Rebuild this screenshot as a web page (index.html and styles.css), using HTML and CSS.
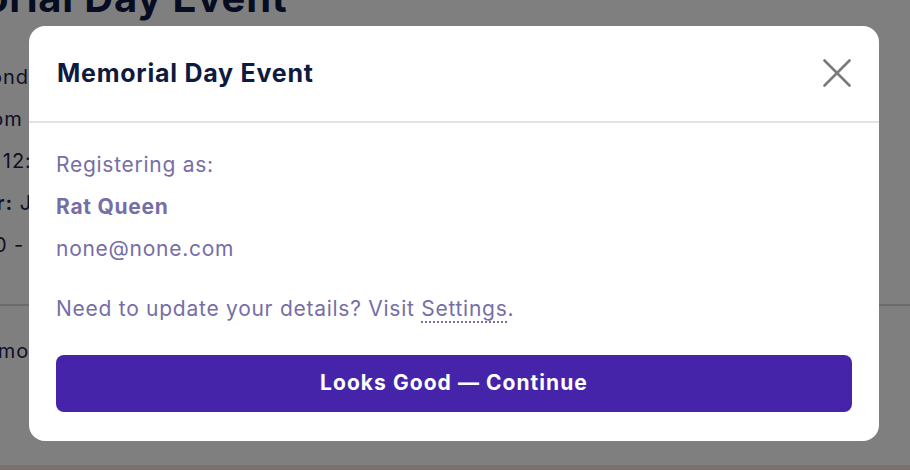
FILE: index.html
```html
<!DOCTYPE html>
<html lang="en">
<head>
    <meta charset="UTF-8">
    <meta name="viewport" content="width=device-width, initial-scale=1.0">
    <title>Memorial Day Event - Register</title>
    <link rel="stylesheet" href="styles.css">
</head>
<body>
    <!-- Event page behind the dialog -->
    <main class="page">
        <h1 class="event-title">Memorial Day Event</h1>
        <ul class="event-facts">
            <li>Monday, May 27</li>
            <li>From 12:00 pm</li>
            <li>To 12:00 am</li>
            <li><b>For:</b> Jane Doe</li>
            <li>$10 - $20</li>
        </ul>
        <hr class="event-rule">
        <p class="event-about">Memorial Day gathering at the park.</p>
        <footer class="page-footer"></footer>
    </main>

    <!-- Registration dialog -->
    <div class="overlay">
        <div class="modal">
            <div class="modal-header">
                <h2>Memorial Day Event</h2>
                <button type="button" class="close-btn" aria-label="Close">
                    <svg width="28" height="28" viewBox="0 0 28 28">
                        <path d="M1.5 1.5 L26.5 26.5 M26.5 1.5 L1.5 26.5" stroke="#7a7a7a" stroke-width="2.6" stroke-linecap="round" fill="none"/>
                    </svg>
                </button>
            </div>
            <div class="modal-body">
                <div class="identity">
                    <p>Registering as:</p>
                    <p class="name">Rat Queen</p>
                    <p>none@none.com</p>
                </div>
                <p class="note">Need to update your details? Visit <a href="#">Settings</a>.</p>
                <button type="button" class="btn-continue">Looks Good — Continue</button>
            </div>
        </div>
    </div>
</body>
</html>
```

FILE: styles.css
```css
body {
    font-family: Inter, "Noto Sans", sans-serif;
    letter-spacing: 0.06em;
    margin: 0;
    padding: 0;
    background-color: #ffffff;
    overflow: hidden;
}
.page {
    height: 100vh;
    display: flex;
    flex-direction: column;
    margin-left: -108px;
    color: #1c2150;
}
.event-title {
    font-size: 40px;
    font-weight: 700;
    letter-spacing: 0.02em;
    margin: -30px 0 0 -8px;
    line-height: 56px;
    color: #0e1a40;
}
.event-facts {
    list-style: none;
    margin: 36px 0 0 0;
    padding: 0 0 0 79px;
    font-size: 20px;
}
.event-facts li {
    line-height: 30px;
    margin-bottom: 12px;
}
.event-rule {
    border: none;
    border-top: 2px solid #d6d6d6;
    margin: 32px 0 0 0;
}
.event-about {
    font-size: 20px;
    margin: 33px 0 0 74px;
}
.page-footer {
    margin-top: auto;
    height: 5px;
    background-color: #f6e2d5;
}

/* Dialog */
.overlay {
    position: fixed;
    top: 0;
    left: 0;
    right: 0;
    bottom: 0;
    background: rgba(0, 0, 0, 0.5);
    display: flex;
    justify-content: center;
    align-items: flex-start;
    padding-top: 26px;
}
.modal {
    width: 850px;
    background-color: #ffffff;
    border-radius: 16px;
    margin-left: -2px;
}
.modal-header {
    display: flex;
    align-items: center;
    justify-content: space-between;
    padding: 29px 28px 30px 28px;
    border-bottom: 2px solid #e2e2e2;
}
.modal-header h2 {
    margin: 0;
    font-size: 25px;
    line-height: 36px;
    font-weight: 700;
    letter-spacing: 0.03em;
    color: #0e1a40;
}
.close-btn {
    background: none;
    border: none;
    padding: 0;
    width: 28px;
    height: 28px;
    cursor: pointer;
    display: flex;
}
.modal-body {
    padding: 27px 27px 29px 27px;
    color: #766ea6;
    font-size: 21px;
    letter-spacing: 0.035em;
}
.modal-body p {
    margin: 0;
    line-height: 30px;
}
.identity {
    display: flex;
    flex-direction: column;
    gap: 12px;
}
.identity .name {
    font-weight: 700;
}
.note {
    margin-top: 30px !important;
}
.note a {
    color: inherit;
    text-decoration: underline dotted;
    text-decoration-thickness: 2px;
    text-underline-offset: 5px;
}
.btn-continue {
    display: block;
    width: 100%;
    height: 57px;
    margin-top: 31px;
    border: none;
    border-radius: 8px;
    background-color: #4624aa;
    color: #ffffff;
    font-family: Inter, "Noto Sans", sans-serif;
    font-size: 21px;
    font-weight: 700;
    letter-spacing: 0.05em;
    padding-bottom: 3px;
    cursor: pointer;
}
```
